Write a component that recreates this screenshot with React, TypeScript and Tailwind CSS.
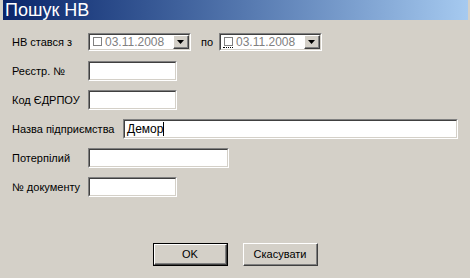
import React from "react";

const font = { fontFamily: '"Liberation Sans", Arial, sans-serif' };

function Sunken({ className, children }: { className?: string; children?: React.ReactNode }) {
  return (
    <div className={`border border-t-[#808080] border-l-[#808080] border-b-white border-r-white ${className ?? ""}`}>
      <div className="h-full w-full border border-t-[#404040] border-l-[#404040] border-b-[#d4d0c8] border-r-[#d4d0c8] bg-white">
        {children}
      </div>
    </div>
  );
}

function DatePick({ focus }: { focus?: boolean }) {
  return (
    <Sunken className="h-[18px] w-[103px]">
      <div className="flex h-full items-center">
        <div className="ml-[2px] flex h-full flex-col items-center justify-center">
          <div className="h-[9px] w-[9px] border border-[#808080]" />
          <div className={`mt-[1px] h-0 w-[10px] border-t border-dotted ${focus ? "border-black" : "border-transparent"}`} />
        </div>
        <span className="ml-[3px] text-[12px] leading-none text-[#808080]">03.11.2008</span>
        <div className="ml-auto mr-0 h-full w-[16px] border border-t-white border-l-white border-b-[#404040] border-r-[#404040] bg-[#d4d0c8]">
          <div className="flex h-full w-full items-center justify-center border-b border-r border-[#808080]">
            <svg width="7" height="4" viewBox="0 0 7 4">
              <path d="M0 0h7L3.5 4z" fill="#000" />
            </svg>
          </div>
        </div>
      </div>
    </Sunken>
  );
}

function Row({ label, labelW, children, className }: { label: string; labelW: string; children: React.ReactNode; className?: string }) {
  return (
    <div className={`flex items-center ${className ?? ""}`}>
      <span className={`${labelW} shrink-0 text-[11px] leading-none text-black`}>{label}</span>
      {children}
    </div>
  );
}

export default function App() {
  return (
    <div style={font} className="flex h-[278px] w-[470px] flex-col bg-[#d4d0c8] pl-[3px] pr-[2px]">
      <div className="flex h-[20px] w-full items-center bg-gradient-to-r from-[#0a246a] to-[#a6caf0] pl-[2px]">
        <span className="text-[18px] leading-none text-white">Пошук НВ</span>
      </div>

      <div className="flex flex-col pl-[9px]">
        <Row label="НВ стався з" labelW="w-[76px]" className="mt-[13px]">
          <DatePick />
          <span className="ml-[10px] w-[18px] text-[11px] leading-none">по</span>
          <DatePick focus />
        </Row>

        <Row label="Реєстр. №" labelW="w-[76px]" className="mt-[10px]">
          <Sunken className="h-[20px] w-[89px]" />
        </Row>

        <Row label="Код ЄДРПОУ" labelW="w-[76px]" className="mt-[9px]">
          <Sunken className="h-[20px] w-[89px]" />
        </Row>

        <Row label="Назва підприємства" labelW="w-[111px]" className="mt-[9px]">
          <Sunken className="h-[20px] w-[335px]">
            <div className="flex h-full items-center pl-[2px]">
              <span className="text-[12px] leading-none text-black">Демор</span>
              <div className="h-[14px] w-px bg-black" />
            </div>
          </Sunken>
        </Row>

        <Row label="Потерпілий" labelW="w-[76px]" className="mt-[9px]">
          <Sunken className="h-[20px] w-[141px]" />
        </Row>

        <Row label="№ документу" labelW="w-[76px]" className="mt-[9px]">
          <Sunken className="h-[20px] w-[89px]" />
        </Row>
      </div>

      <div className="mt-[46px] flex gap-[15px] pl-[150px]">
        <button className="h-[23px] w-[75px] border border-black bg-[#d4d0c8] p-0">
          <div className="h-full w-full border border-t-white border-l-white border-b-[#404040] border-r-[#404040]">
            <div className="flex h-full w-full items-center justify-center border-b border-r border-[#808080] text-[11px]">
              OK
            </div>
          </div>
        </button>
        <button className="h-[23px] w-[75px] border border-t-white border-l-white border-b-[#404040] border-r-[#404040] bg-[#d4d0c8] p-0">
          <div className="flex h-full w-full items-center justify-center border-b border-r border-[#808080] text-[11px]">
            Скасувати
          </div>
        </button>
      </div>
    </div>
  );
}
